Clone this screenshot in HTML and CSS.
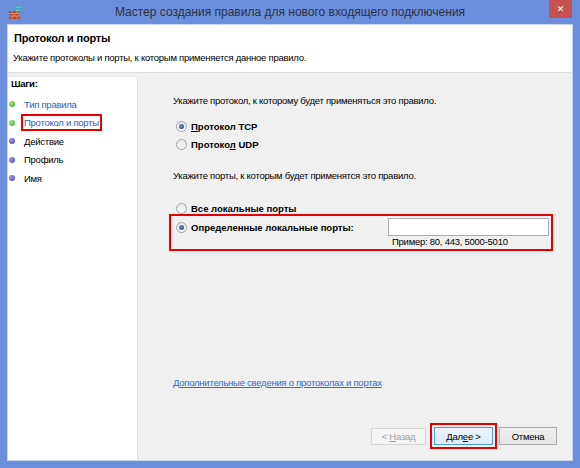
FILE: index.html
```html
<!DOCTYPE html>
<html lang="ru">
<head>
    <meta charset="UTF-8">
    <title>Мастер создания правила</title>
    <link rel="stylesheet" href="styles.css">
</head>
<body>
    <div class="window">
        <div class="titlebar">
            <svg class="app-icon" width="13" height="14" viewBox="0 0 13 14">
                <rect x="0" y="6" width="11" height="8" fill="#b5482c"/>
                <path d="M0 8.5h11M0 11h11M3 6v2.5M8 6v2.5M5 8.5V11M10 8.5V11M3 11v3M8 11v3" stroke="#e8a070" stroke-width="0.8"/>
                <circle cx="8.8" cy="4" r="3.6" fill="#3c9ed8"/>
                <path d="M6.3 3c1-1 2 0 3-1s1.5 1 2.6.6M6.8 5.5c1 0 1.5-1 2.5-.5s1.5 0 2-.6" stroke="#7fd36b" stroke-width="1.1" fill="none"/>
            </svg>
            <div class="title">Мастер создания правила для нового входящего подключения</div>
            <div class="close">&#x2715;</div>
        </div>
        <div class="client">
            <div class="header">
                <h1>Протокол и порты</h1>
                <p>Укажите протоколы и порты, к которым применяется данное правило.</p>
            </div>
            <div class="main">
                <div class="steps">
                    <div class="steps-title">Шаги:</div>
                    <ul>
                        <li><span class="dot green"></span><a>Тип правила</a></li>
                        <li><span class="dot green"></span><a class="current">Протокол и порты</a></li>
                        <li><span class="dot blue"></span>Действие</li>
                        <li><span class="dot blue"></span>Профиль</li>
                        <li><span class="dot blue"></span>Имя</li>
                    </ul>
                </div>
                <div class="content">
                    <p class="hint">Укажите протокол, к которому будет применяться это правило.</p>
                    <div class="options">
                        <label class="radio-row"><span class="radio checked"></span><b><u>П</u>ротокол TCP</b></label>
                        <label class="radio-row"><span class="radio"></span><b>Протоко<u>л</u> UDP</b></label>
                    </div>
                    <p class="hint ports-hint">Укажите порты, к которым будет применятся это правило.</p>
                    <label class="radio-row"><span class="radio"></span><b>Все локальные порты</b></label>
                    <div class="marked ports-box">
                        <div class="ports-line">
                            <label class="radio-row"><span class="radio checked"></span><b>Определенные локальные порты:</b></label>
                            <input type="text" class="ports-input">
                        </div>
                        <div class="example">Пример: 80, 443, 5000-5010</div>
                    </div>
                    <div class="link-row"><a class="more-link">Дополнительные сведения о протоколах и портах</a></div>
                    <div class="buttons">
                        <button class="btn" disabled>&lt; <u>Н</u>азад</button>
                        <span class="marked next-wrap"><button class="btn default">Дал<u>е</u>е &gt;</button></span>
                        <button class="btn">Отмена</button>
                    </div>
                </div>
            </div>
        </div>
    </div>
</body>
</html>
```

FILE: styles.css
```css
body {
    margin: 0;
    font-family: "Liberation Sans", Arial, sans-serif;
    font-size: 9.5px;
    letter-spacing: -0.25px;
    color: #000;
}

.window {
    width: 580px;
    height: 468px;
    box-sizing: border-box;
    background-color: #6b8fdd;
    padding: 0 7px 7px 7px;
    display: flex;
    flex-direction: column;
}

.titlebar {
    height: 24px;
    flex-shrink: 0;
    display: grid;
    grid-template-columns: 1fr auto 1fr;
    align-items: start;
}

.app-icon {
    margin: 5px 0 0 2px;
}

.title {
    font-size: 12px;
    letter-spacing: 0;
    color: #2d3140;
    line-height: 14px;
    margin-top: 5px;
}

.close {
    justify-self: end;
    width: 23px;
    height: 18px;
    margin-right: 1px;
    background-color: #c75050;
    color: #fff;
    font-family: "DejaVu Sans", sans-serif;
    font-size: 9px;
    font-weight: bold;
    display: flex;
    justify-content: center;
    align-items: center;
}

.client {
    flex: 1;
    display: flex;
    flex-direction: column;
    background-color: #f0f0f0;
    border: 1px solid #c9d5ef;
}

.header {
    background-color: #fff;
    height: 47px;
    border-bottom: 1px solid #dedede;
    padding: 0 5px;
}

.header h1 {
    font-size: 11px;
    letter-spacing: -0.2px;
    line-height: 14px;
    margin: 6px 0 0 1px;
}

.header p {
    line-height: 12px;
    margin: 7px 0 0 0;
}

.main {
    flex: 1;
    display: flex;
    padding-top: 3px;
}

.steps {
    width: 129px;
    background-color: #fff;
    border-right: 1px solid #e2e2e2;
    border-top: 1px solid #ebebeb;
    margin-right: 2px;
}

.steps-title {
    font-weight: bold;
    line-height: 14px;
    padding-left: 3px;
}

.steps ul {
    list-style: none;
    margin: 4px 0 0 0;
    padding: 0 0 0 1px;
}

.steps li {
    height: 18.5px;
    display: flex;
    align-items: center;
}

.dot {
    width: 6px;
    height: 6px;
    border-radius: 50%;
    margin-right: 9px;
}

.dot.green {
    background: radial-gradient(circle at 35% 35%, #a6e27e, #3fa32a);
}

.dot.blue {
    background: radial-gradient(circle at 35% 35%, #9b96ec, #4b3fb8);
}

.steps a {
    color: #1c63c4;
    line-height: 13px;
}

.steps a.current {
    padding: 0 1px;
    margin-left: -1px;
    outline: 2px solid #e60000;
}

.content {
    flex: 1;
    padding: 18px 15px 11px 33px;
    display: flex;
    flex-direction: column;
}

.hint {
    margin: 0;
    line-height: 14px;
}

.options {
    margin-top: 9px;
}

.radio-row {
    display: flex;
    align-items: center;
    height: 18px;
    padding-left: 3px;
}

.radio-row b {
    letter-spacing: 0;
}

.radio {
    width: 11px;
    height: 11px;
    border-radius: 50%;
    border: 1px solid #a2a2a2;
    background: linear-gradient(#e6e6e6, #fafafa);
    box-sizing: border-box;
    margin-right: 4px;
    position: relative;
}

.radio.checked::after {
    content: "";
    position: absolute;
    left: 2px;
    top: 2px;
    width: 5px;
    height: 5px;
    border-radius: 50%;
    background: radial-gradient(circle at 40% 40%, #6f8fc4, #1f3f7a);
}

.ports-hint {
    margin-top: 16px;
    margin-bottom: 16px;
}

.marked {
    border: 2px solid #e60000;
}

.ports-box {
    margin: -3px 0 0 -4px;
    width: 384px;
    height: 37px;
    padding: 2px 2px 0 2px;
    box-sizing: border-box;
}

.ports-line {
    display: flex;
    align-items: center;
    justify-content: space-between;
}

.ports-input {
    width: 161px;
    height: 18px;
    box-sizing: border-box;
    border: 1px solid #abadb3;
    background-color: #fff;
    margin: 0;
}

.example {
    margin-left: 219px;
    line-height: 12px;
}

.link-row {
    margin-top: 125px;
    line-height: 13px;
}

.more-link {
    color: #2f6bd3;
    text-decoration: underline;
}

.buttons {
    margin-top: auto;
    display: flex;
    justify-content: flex-end;
    align-items: center;
}

.btn {
    font-family: "Liberation Sans", Arial, sans-serif;
    font-size: 9.5px;
    letter-spacing: -0.25px;
    width: 58px;
    height: 18px;
    padding: 0;
    border: 1px solid #acacac;
    background: linear-gradient(#f0f0f0, #e5e5e5);
    color: #000;
}

.btn:disabled {
    width: 55px;
    height: 17px;
    color: #a0a0a0;
    border-color: #d5d5d5;
    background: #f4f4f4;
}

.btn.default {
    border-color: #4d9ee6;
    background: linear-gradient(#ecf4fc, #dcecfc);
    width: 59px;
}

.next-wrap {
    display: flex;
    padding: 2px;
    margin: 0 2px 0 4px;
}
```
